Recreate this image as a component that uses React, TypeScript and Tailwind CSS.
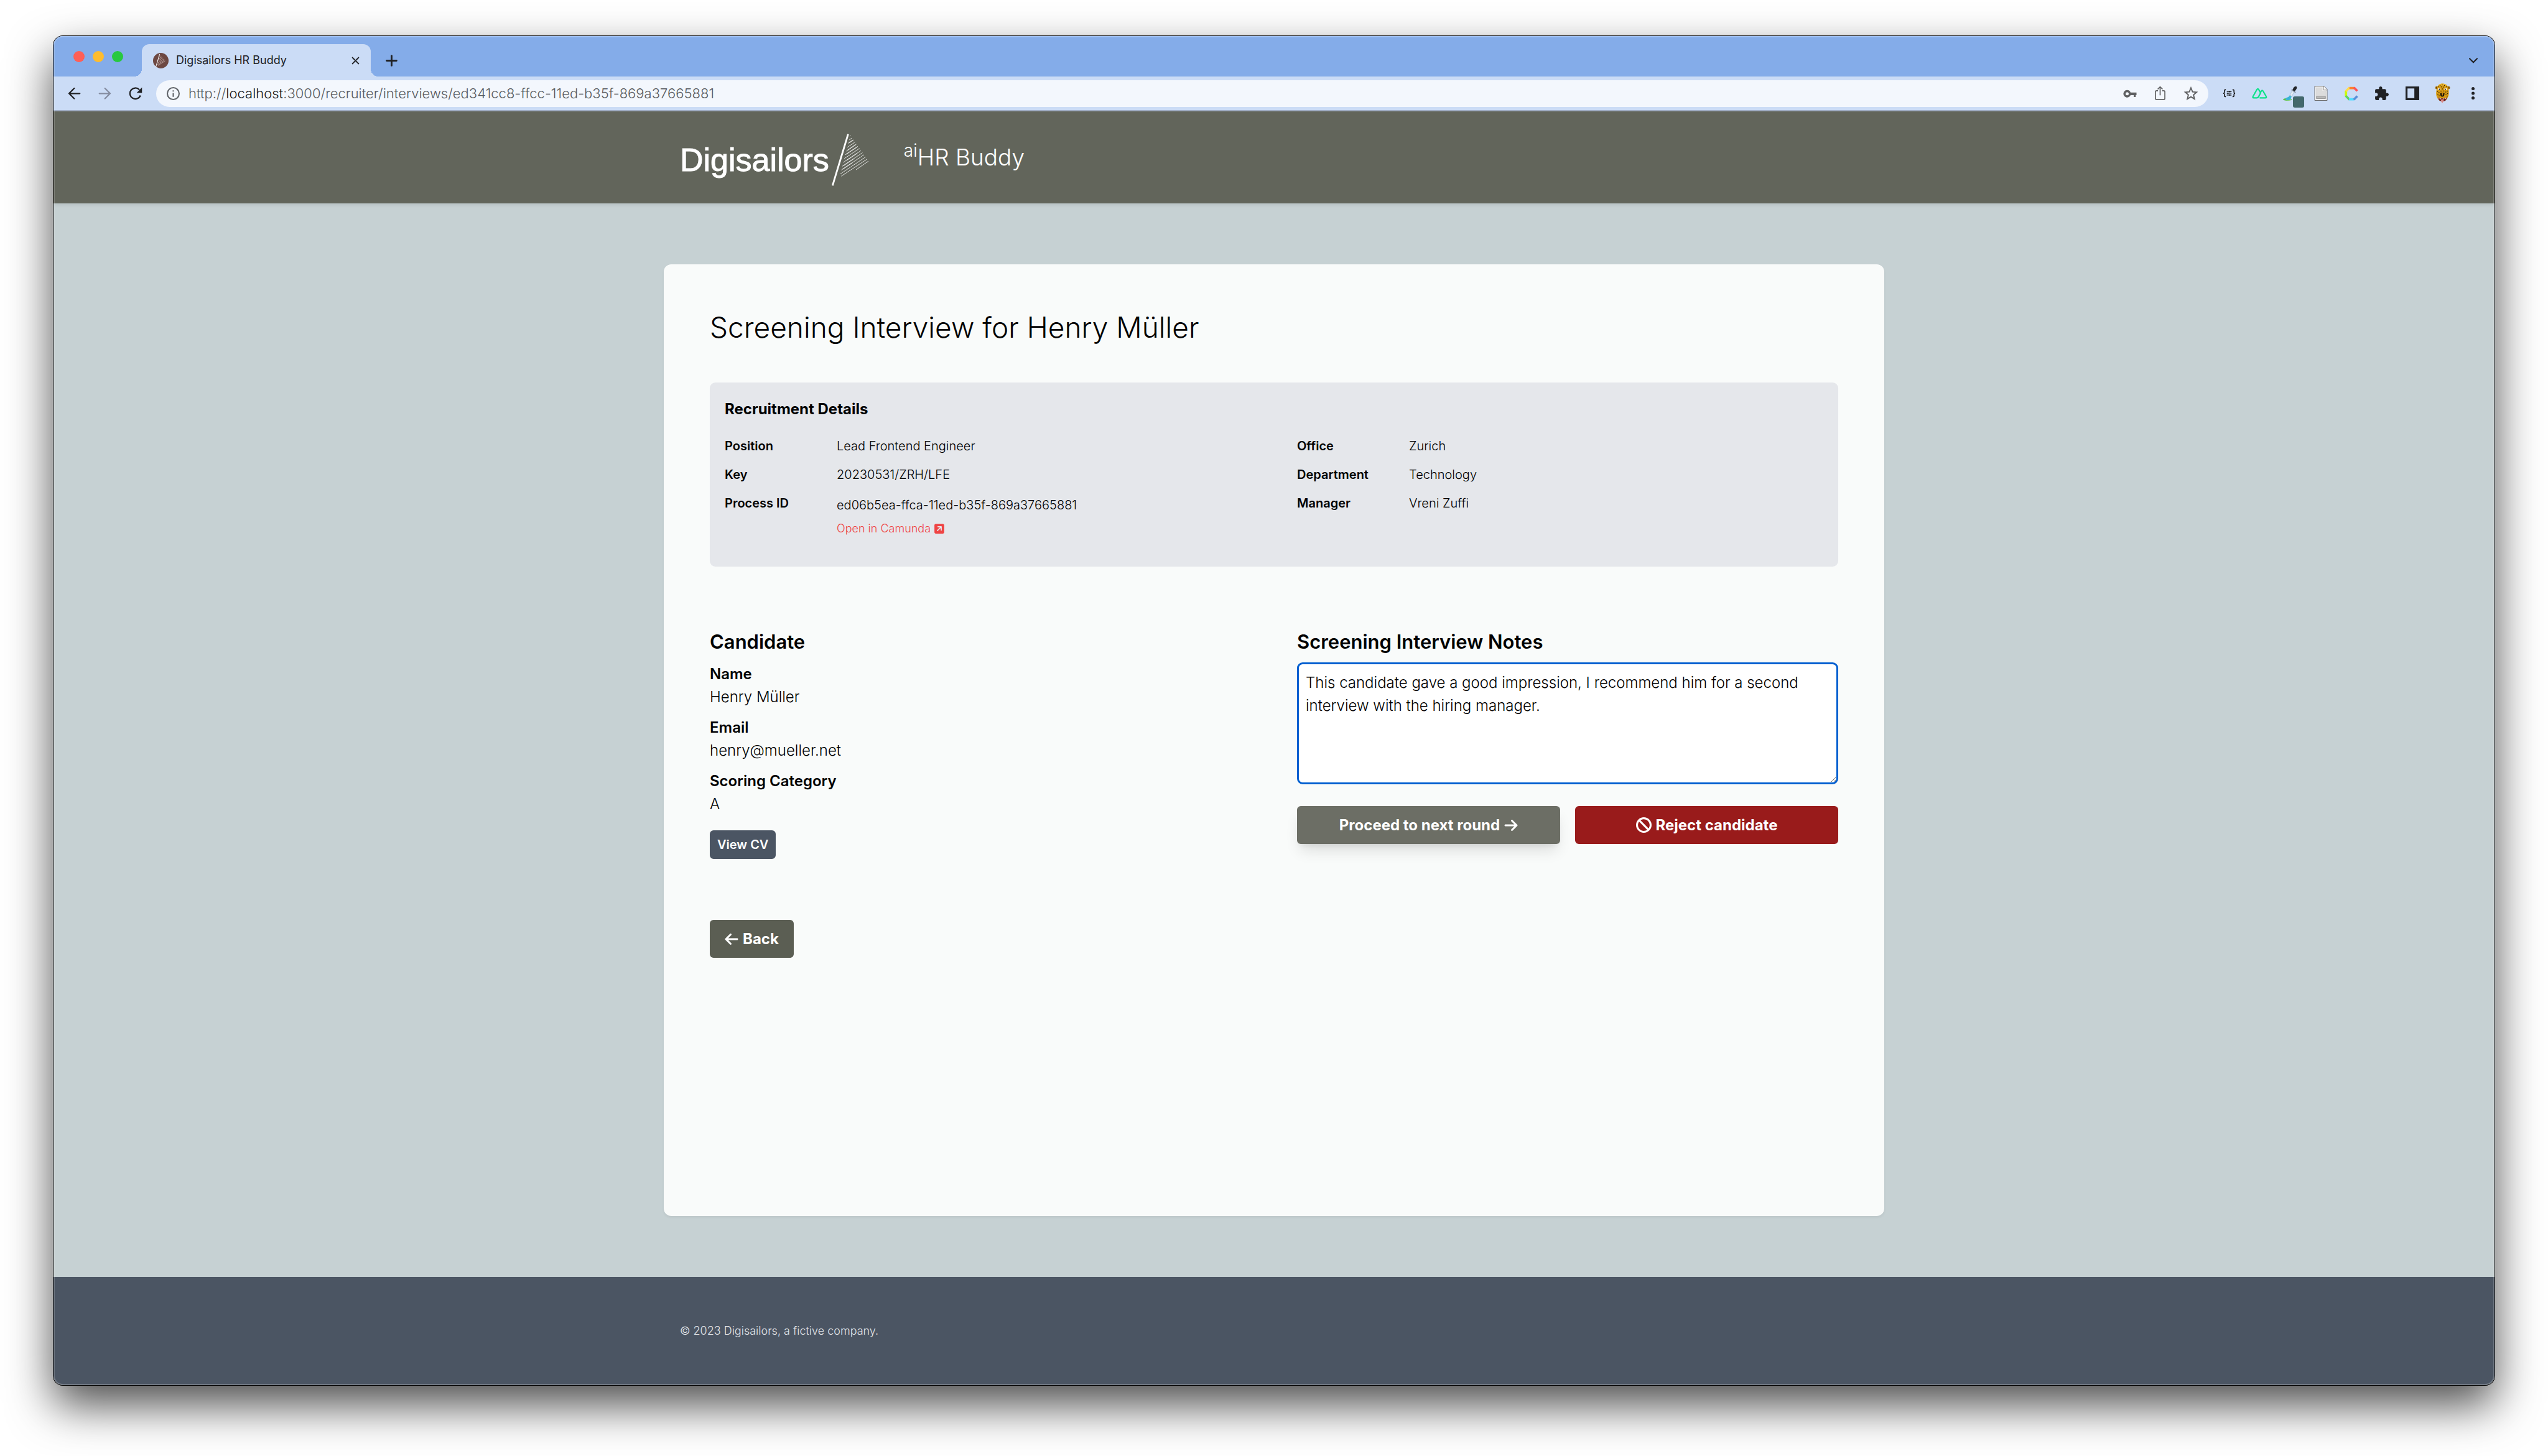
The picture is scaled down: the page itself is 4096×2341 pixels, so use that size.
import type { ReactNode } from "react";
import { FaArrowLeft, FaArrowRight, FaBan, FaSquareArrowUpRight } from "react-icons/fa6";

const SAIL_LINES = [
  "M218 52L222 49", "M213 77L229 66", "M207 99L240 77", "M201 124L249 91", "M195 148L258 104",
  "M188 171L267 118", "M181 195L277 131", "M175 219L286 145", "M169 243L296 158",
  "M163 267L305 171", "M157 291L315 185", "M163 305L325 198", "M255 265L333 211",
];

function SailMark({ className }: { className: string }) {
  return (
    <svg viewBox="95 35 250 335" className={className} fill="none" stroke="#fff" aria-hidden="true">
      <path d="M206 41L108 364" strokeWidth="11" />
      <g strokeWidth="3.5" strokeOpacity="0.9">
        {SAIL_LINES.map((d) => <path key={d} d={d} />)}
      </g>
      <g strokeWidth="6" strokeOpacity="0.45">
        <path d="M209 96L236 79M203 141L252 107M194 167L262 122M196 206L262 162M176 240L240 197M172 261L232 221" />
      </g>
    </svg>
  );
}

function Cell({ label, children }: { label: string; children: ReactNode }) {
  return (
    <button type="button" aria-label={label} className="flex h-[43px] w-[49px] shrink-0 items-center justify-center">
      {children}
    </button>
  );
}

function Favicon() {
  return (
    <svg viewBox="0 0 96 96" className="size-[25px] shrink-0" fill="none" aria-hidden="true">
      <circle cx="48" cy="48" r="48" fill="#6d4842" />
      <path d="M41 8L17 88" stroke="#fff" strokeWidth="4" />
      <path d="M38 25L47 18M37 36L54 25M34 48L60 31M31 60L66 38M28 72L72 44M31 78L75 50" stroke="#d9c8c5" strokeWidth="2.5" />
    </svg>
  );
}

function LeopardAvatar() {
  return (
    <svg viewBox="834 254 96 128" className="h-[32px] w-[25px]" aria-hidden="true">
      <circle cx="845" cy="282" r="10" fill="#a8720f" />
      <circle cx="920" cy="282" r="10" fill="#a8720f" />
      <circle cx="844" cy="283" r="5" fill="#5a3a0c" />
      <circle cx="921" cy="283" r="5" fill="#5a3a0c" />
      <path d="M882 256C903 256 918 268 920 286C922 302 925 318 920 334C914 350 906 364 896 366H866C854 362 846 346 842 332C838 316 843 300 845 286C848 268 862 256 882 256Z" fill="#d79a12" />
      <path d="M868 258C890 252 906 262 912 274C896 266 870 268 852 276C854 266 860 260 868 258Z" fill="#ecb42a" />
      <path d="M852 344Q880 358 910 344Q906 366 894 368H868Q856 364 852 344Z" fill="#6b1d1a" />
      <path d="M856 346L862 348L860 358ZM866 350L874 352L870 358ZM886 352L894 350L891 358ZM899 348L906 346L903 357Z" fill="#fff" />
      <path d="M872 358Q880 354 889 358Q890 374 880 380Q871 374 872 358Z" fill="#d98a86" />
      <ellipse cx="860" cy="291" rx="9" ry="7" fill="#f6f1e4" />
      <ellipse cx="902" cy="291" rx="9" ry="7" fill="#f6f1e4" />
      <circle cx="862" cy="292" r="4" fill="#1a140a" />
      <circle cx="900" cy="292" r="4" fill="#1a140a" />
      <path d="M866 318Q880 310 895 318L892 334Q880 346 869 334Z" fill="#1d1508" />
      <path d="M876 312Q881 308 886 312L884 332H878Z" fill="#c98b14" />
      <g fill="#2b1d07">
        <circle cx="866" cy="268" r="3" /><circle cx="880" cy="264" r="3" /><circle cx="894" cy="268" r="3" />
        <circle cx="874" cy="277" r="3" /><circle cx="888" cy="278" r="3" /><circle cx="907" cy="276" r="3" />
        <circle cx="855" cy="276" r="3" /><circle cx="881" cy="290" r="3" /><circle cx="850" cy="306" r="3" />
        <circle cx="859" cy="312" r="3" /><circle cx="872" cy="304" r="3" /><circle cx="890" cy="303" r="3" />
        <circle cx="903" cy="310" r="3" /><circle cx="913" cy="304" r="3" /><circle cx="852" cy="324" r="3" />
        <circle cx="860" cy="334" r="3" /><circle cx="904" cy="326" r="3" /><circle cx="912" cy="336" r="3" />
        <circle cx="914" cy="320" r="3" />
      </g>
    </svg>
  );
}

function TitleBar() {
  return (
    <div className="flex h-[65px] items-end bg-[#84ace9]">
      <div className="flex h-[65px] w-[142px] shrink-0 items-center gap-[13px] pl-8">
        <button type="button" aria-label="Close window" className="size-[18px] rounded-full bg-[#ff5f57]" />
        <button type="button" aria-label="Minimize window" className="size-[18px] rounded-full bg-[#febc2e]" />
        <button type="button" aria-label="Zoom window" className="size-[18px] rounded-full bg-[#28c840]" />
      </div>
      <div className="relative flex h-[52px] w-[368px] items-center rounded-t-[12px] bg-[#cbdcf6] pr-[18px] pl-[18px]">
        <span className="absolute bottom-0 -left-3 size-3 bg-[radial-gradient(circle_at_0_0,#84ace9_12px,#cbdcf6_12px)]" />
        <span className="absolute -right-3 bottom-0 size-3 bg-[radial-gradient(circle_at_100%_0,#84ace9_12px,#cbdcf6_12px)]" />
        <Favicon />
        <span className="ml-3 flex-1 text-[18px] leading-6 whitespace-nowrap text-[#202124]">Digisailors HR Buddy</span>
        <button type="button" aria-label="Close tab">
          <svg viewBox="0 0 16 16" className="size-[13px]" stroke="#202124" strokeWidth="2.4" strokeLinecap="round" aria-hidden="true">
            <path d="M2 2L14 14M14 2L2 14" />
          </svg>
        </button>
      </div>
      <button type="button" aria-label="New tab" className="ml-6 flex h-[52px] items-center">
        <svg viewBox="0 0 24 24" className="size-[19px]" stroke="#202124" strokeWidth="3.6" strokeLinecap="round" aria-hidden="true">
          <path d="M2 12H22M12 2V22" />
        </svg>
      </button>
      <button type="button" aria-label="Search tabs" className="mr-[10px] ml-auto flex h-[52px] w-[49px] items-center justify-center">
        <svg viewBox="1046 92 56 36" className="h-[9px] w-[14px]" fill="none" stroke="#202124" strokeWidth="8" strokeLinecap="round" aria-hidden="true">
          <path d="M1050 97L1074 121L1098 97" />
        </svg>
      </button>
    </div>
  );
}

function Toolbar() {
  return (
    <div className="flex h-[56px] items-center border-b-2 border-[#a3b1c9] bg-[#cbdcf6] pr-[10px] pl-[9px]">
      <Cell label="Back">
        <svg viewBox="96 336 84 80" className="h-5 w-[21px]" fill="none" stroke="#202124" strokeWidth="9" strokeLinecap="round" strokeLinejoin="round" aria-hidden="true">
          <path d="M173 377H104M137 344L104 377L137 410" />
        </svg>
      </Cell>
      <Cell label="Forward">
        <svg viewBox="288 336 84 80" className="h-5 w-[21px]" fill="none" stroke="#848ca0" strokeWidth="9" strokeLinecap="round" strokeLinejoin="round" aria-hidden="true">
          <path d="M295 377H364M331 344L364 377L331 410" />
        </svg>
      </Cell>
      <Cell label="Reload">
        <svg viewBox="481 336 86 84" className="h-[21px] w-[22px]" fill="none" aria-hidden="true">
          <path d="M548 353A35 35 0 1 0 555 390" stroke="#202124" strokeWidth="9" />
          <path d="M565 338V373H531Z" fill="#202124" />
        </svg>
      </Cell>
      <div className="mx-[9px] flex h-[43px] flex-1 items-center rounded-full bg-[#f3f7fd] pr-1 pl-[17px]">
        <svg viewBox="0 0 80 80" className="size-[21px] shrink-0" fill="none" aria-hidden="true">
          <circle cx="40" cy="40" r="36" stroke="#5f6368" strokeWidth="8" />
          <path d="M36 20H44V28H36ZM36 36H44V60H36Z" fill="#5f6368" />
        </svg>
        <div role="textbox" aria-label="Address" className="ml-[14px] flex-1 text-[22px] leading-7 font-[350] whitespace-nowrap text-[#585b5f]">
          http://<span className="text-[#101114]">localhost</span>:3000/recruiter/interviews/ed341cc8-ffcc-11ed-b35f-869a37665881
        </div>
        <Cell label="Passwords">
          <svg viewBox="40 108 88 52" className="h-[13px] w-[22px]" fill="#5f6062" aria-hidden="true">
            <path fillRule="evenodd" d="M66 111A24 24 0 1 0 88 144H108V156H121V144H126V127H88A24 24 0 0 0 66 111ZM66 125A10 10 0 1 1 66 145A10 10 0 1 1 66 125Z" />
          </svg>
        </Cell>
        <Cell label="Share">
          <svg viewBox="240 94 72 92" className="h-6 w-[19px]" fill="none" stroke="#5f6062" strokeWidth="6.5" strokeLinejoin="round" aria-hidden="true">
            <path d="M263 124H254Q247 124 247 131V172Q247 179 254 179H298Q305 179 305 172V131Q305 124 298 124H289M276 152V102M261 115L276 100L291 115" />
          </svg>
        </Cell>
        <Cell label="Bookmark">
          <svg viewBox="422 92 92 92" className="size-6" fill="none" stroke="#5f6062" strokeWidth="7.5" aria-hidden="true">
            <path d="M468 105L478 129L503 131L484 148L490 173L468 160L446 173L452 148L433 131L458 129Z" />
          </svg>
        </Cell>
      </div>
      <Cell label="JSON viewer">
        <svg viewBox="666 114 82 54" className="h-[14px] w-[21px]" fill="none" stroke="#111" strokeWidth="6" aria-hidden="true">
          <path d="M686 119H681Q677 119 677 124V134Q677 140 670 141Q677 142 677 148V158Q677 162 681 162H686M728 119H733Q737 119 737 124V134Q737 140 744 141Q737 142 737 148V158Q737 162 733 162H728" />
          <path d="M692 130H722M692 141H722M692 152H722" strokeWidth="4.5" />
          <path d="M711 125V135M699 136V146M711 147V157" strokeWidth="6" />
        </svg>
      </Cell>
      <Cell label="Nuxt">
        <svg viewBox="850 102 100 72" className="h-[18px] w-[25px]" fill="none" stroke="#0ce28a" strokeWidth="9" strokeLinejoin="round" aria-hidden="true">
          <path d="M884 167H863Q852 167 858 157L882 114Q888 105 894 114L906 135L893 160Q890 167 882 167" />
          <path d="M900 167H936Q947 167 941 157L922 124Q916 115 910 124L904 135" />
        </svg>
      </Cell>
      <Cell label="Color picker">
        <span className="relative flex">
          <svg viewBox="1042 90 96 96" className="size-[25px]" aria-hidden="true">
            <ellipse cx="1073" cy="174" rx="27" ry="8" fill="#5cc04a" />
            <ellipse cx="1080" cy="175" rx="16" ry="5" fill="#a7e36a" />
            <path d="M1062 166L1080 158L1090 146L1100 152L1092 174Q1078 184 1062 174Z" fill="#3ab4d6" />
            <path d="M1088 148L1104 116L1116 124L1100 156Z" fill="#dfeaf4" stroke="#93a9bd" strokeWidth="2" />
            <path d="M1098 114L1124 132" stroke="#8896a5" strokeWidth="6" />
            <path d="M1104 116L1112 100Q1124 88 1131 97Q1133 106 1126 114L1118 125Z" fill="#22252a" />
          </svg>
          <span className="absolute -right-[10px] -bottom-[10px] size-[18px] rounded-[3px] bg-[#43686c]" />
        </span>
      </Cell>
      <Cell label="Page notes">
        <svg viewBox="70 268 88 100" className="h-[26px] w-[22px]" aria-hidden="true">
          <path d="M74 272H134L154 292V364H74Z" fill="#f6f6f6" stroke="#6e6e6e" strokeWidth="4" />
          <path d="M82 280H124V302H146V356H82Z" fill="#dcdcdc" />
          <path d="M130 274V297H153" fill="none" stroke="#8b8b8b" strokeWidth="4" />
          <path d="M85 338H143V352H85Z" fill="#b9b9b9" stroke="#8b8b8b" strokeWidth="3" />
        </svg>
      </Cell>
      <Cell label="Color wheel">
        <svg viewBox="260 272 88 92" className="h-[23px] w-[22px]" fill="none" strokeWidth="15" aria-hidden="true">
          <path d="M269 300V337" stroke="#c8fb06" />
          <path d="M268 303L292 279" stroke="#ffdc4f" />
          <path d="M268 333L292 357" stroke="#5fd464" />
          <path d="M291 282H324" stroke="#ff8330" />
          <path d="M320 279L342 301" stroke="#ff5459" />
          <path d="M288 354H322" stroke="#52dcff" />
          <path d="M319 357L342 334" stroke="#5a8fd8" />
        </svg>
      </Cell>
      <Cell label="Extensions">
        <svg viewBox="0 0 24 24" className="size-[25px]" fill="#202124" aria-hidden="true">
          <path d="M20.5 11H19V7c0-1.1-.9-2-2-2h-4V3.500C13 2.120 11.880 1 10.500 1S8 2.120 8 3.500V5H4c-1.100 0-1.990.9-1.990 2v3.800H3.500c1.490 0 2.700 1.210 2.700 2.700s-1.210 2.700-2.700 2.700H2V20c0 1.100.9 2 2 2h3.800v-1.500c0-1.490 1.210-2.700 2.700-2.700 1.490 0 2.700 1.210 2.700 2.700V22H17c1.100 0 2-.9 2-2v-4h1.500c1.380 0 2.500-1.120 2.500-2.500S21.880 11 20.500 11z" />
        </svg>
      </Cell>
      <Cell label="Side panel">
        <svg viewBox="648 276 84 84" className="size-[22px]" fill="#202124" aria-hidden="true">
          <path fillRule="evenodd" d="M648 276H732V360H648ZM660 288V348H702V288Z" />
        </svg>
      </Cell>
      <Cell label="Profile">
        <LeopardAvatar />
      </Cell>
      <Cell label="Menu">
        <svg viewBox="0 0 20 80" className="h-5 w-[5px]" fill="#202124" aria-hidden="true">
          <circle cx="10" cy="10" r="10" /><circle cx="10" cy="40" r="10" /><circle cx="10" cy="70" r="10" />
        </svg>
      </Cell>
    </div>
  );
}

function SiteHeader() {
  return (
    <header className="relative flex h-[148px] shrink-0 justify-center bg-[#62655b] shadow-[0_2px_6px_rgba(0,0,0,0.1)]">
      <div className="flex w-full max-w-[1962px] items-center px-[26px] pt-[7px] text-white">
        <a href="#home" className="flex items-center">
          <span className="font-['Liberation_Sans'] text-[52px] leading-[60px] [-webkit-text-stroke:1px_#fff]">Digisailors</span>
          <SailMark className="ml-[2px] h-[86px] w-[64px]" />
        </a>
        <span className="mb-2 ml-[54px] text-[37px] leading-[44px] font-light whitespace-nowrap">
          <sup className="text-[28px]">ai</sup>HR Buddy
        </span>
      </div>
    </header>
  );
}

function DetailRow({ label, children }: { label: string; children: ReactNode }) {
  return (
    <div className="flex text-[20px] leading-[31px]">
      <dt className="w-[180px] shrink-0 font-semibold">{label}</dt>
      <dd className="font-light">{children}</dd>
    </div>
  );
}

function RecruitmentDetails() {
  return (
    <section className="mt-[61px] rounded-[9px] bg-[#e5e7eb] px-6 pt-6 pb-[43px]">
      <h2 className="text-[24px] leading-[37px] font-bold">Recruitment Details</h2>
      <div className="mt-[26px] grid grid-cols-2 gap-x-[74px]">
        <dl className="flex flex-col gap-[15px]">
          <DetailRow label="Position">Lead Frontend Engineer</DetailRow>
          <DetailRow label="Key">20230531/ZRH/LFE</DetailRow>
          <DetailRow label="Process ID">
            <span className="block leading-[37px]">ed06b5ea-ffca-11ed-b35f-869a37665881</span>
            <a href="#camunda" className="flex items-center gap-[6px] text-[18px] leading-[37px] text-[#ef4444]">
              Open in Camunda
              <FaSquareArrowUpRight className="h-[18px] w-4" />
            </a>
          </DetailRow>
        </dl>
        <dl className="flex flex-col gap-[15px]">
          <DetailRow label="Office">Zurich</DetailRow>
          <DetailRow label="Department">Technology</DetailRow>
          <DetailRow label="Manager">Vreni Zuffi</DetailRow>
        </dl>
      </div>
    </section>
  );
}

function CandidateField({ label, value }: { label: string; value: string }) {
  return (
    <div>
      <dt className="font-semibold">{label}</dt>
      <dd className="font-light">{value}</dd>
    </div>
  );
}

function Candidate() {
  return (
    <section>
      <h2 className="text-[31px] leading-[43px] font-semibold">Candidate</h2>
      <dl className="mt-3 flex flex-col gap-3 text-[24px] leading-[37px]">
        <CandidateField label="Name" value="Henry Müller" />
        <CandidateField label="Email" value="henry@mueller.net" />
        <CandidateField label="Scoring Category" value="A" />
      </dl>
      <button type="button" className="mt-6 block rounded-[6px] bg-[#4b5563] px-3 py-2 text-[20px] leading-[30px] font-semibold text-white">
        View CV
      </button>
    </section>
  );
}

function InterviewNotes() {
  return (
    <section>
      <label htmlFor="notes" className="block text-[31px] leading-[43px] font-semibold">Screening Interview Notes</label>
      <textarea
        id="notes"
        defaultValue="This candidate gave a good impression, I recommend him for a second interview with the hiring manager."
        className="mt-3 block h-[196px] w-full rounded-[9px] border-[3px] border-[#005fd0] bg-white px-[11px] py-[11px] text-[24px] leading-[37px] font-light outline-none"
      />
      <div className="mt-[35px] grid grid-cols-2 gap-x-6 text-[24px] leading-[37px] font-bold text-white">
        <button type="button" className="flex items-center justify-center gap-[7px] rounded-[6px] bg-[#6c6e65] py-3 shadow-[0_15px_23px_-5px_rgba(0,0,0,0.12),0_6px_9px_-6px_rgba(0,0,0,0.12)]">
          Proceed to next round
          <FaArrowRight className="h-6 w-[22px]" />
        </button>
        <button type="button" className="flex items-center justify-center gap-[7px] rounded-[6px] bg-[#991b1b] py-3">
          <FaBan className="size-[25px]" />
          Reject candidate
        </button>
      </div>
    </section>
  );
}

export default function App() {
  return (
    <div className="flex min-h-screen flex-col bg-white px-[86px] pt-[58px] pb-[114px] font-[Inter,sans-serif] text-black">
      <div className="relative flex flex-1 flex-col rounded-[15px] shadow-[0_0_0_1px_#000,0_32px_72px_rgba(0,0,0,0.7)]">
        <div className="flex flex-1 flex-col overflow-hidden rounded-[15px]">
          <TitleBar />
          <Toolbar />
          <SiteHeader />
          <main className="flex flex-1 justify-center bg-[#c6d1d3] py-[98px]">
            <article className="w-full max-w-[1962px] rounded-[12px] bg-[#f9fbfa] p-[74px] shadow-[0_2px_4px_rgba(0,0,0,0.06)]">
              <h1 className="text-[46px] leading-[55px] font-light">Screening Interview for Henry Müller</h1>
              <RecruitmentDetails />
              <div className="mt-[99px] grid grid-cols-2 gap-x-[74px]">
                <Candidate />
                <InterviewNotes />
              </div>
              <button type="button" className="mt-[98px] flex items-center gap-[7px] rounded-[6px] bg-[#5b5e53] px-6 py-3 text-[24px] leading-[37px] font-bold text-white">
                <FaArrowLeft className="h-6 w-[22px]" />
                Back
              </button>
            </article>
          </main>
          <footer className="flex h-[174px] shrink-0 justify-center bg-[#4b5563] pt-[71px]">
            <p className="w-full max-w-[1962px] px-[26px] text-[18px] leading-[31px] font-light text-[#e5e7eb]">
              © 2023 Digisailors, a fictive company.
            </p>
          </footer>
        </div>
        <div className="pointer-events-none absolute inset-0 rounded-[15px] shadow-[inset_0_0_0_2px_rgba(255,255,255,0.2)]" />
      </div>
    </div>
  );
}
